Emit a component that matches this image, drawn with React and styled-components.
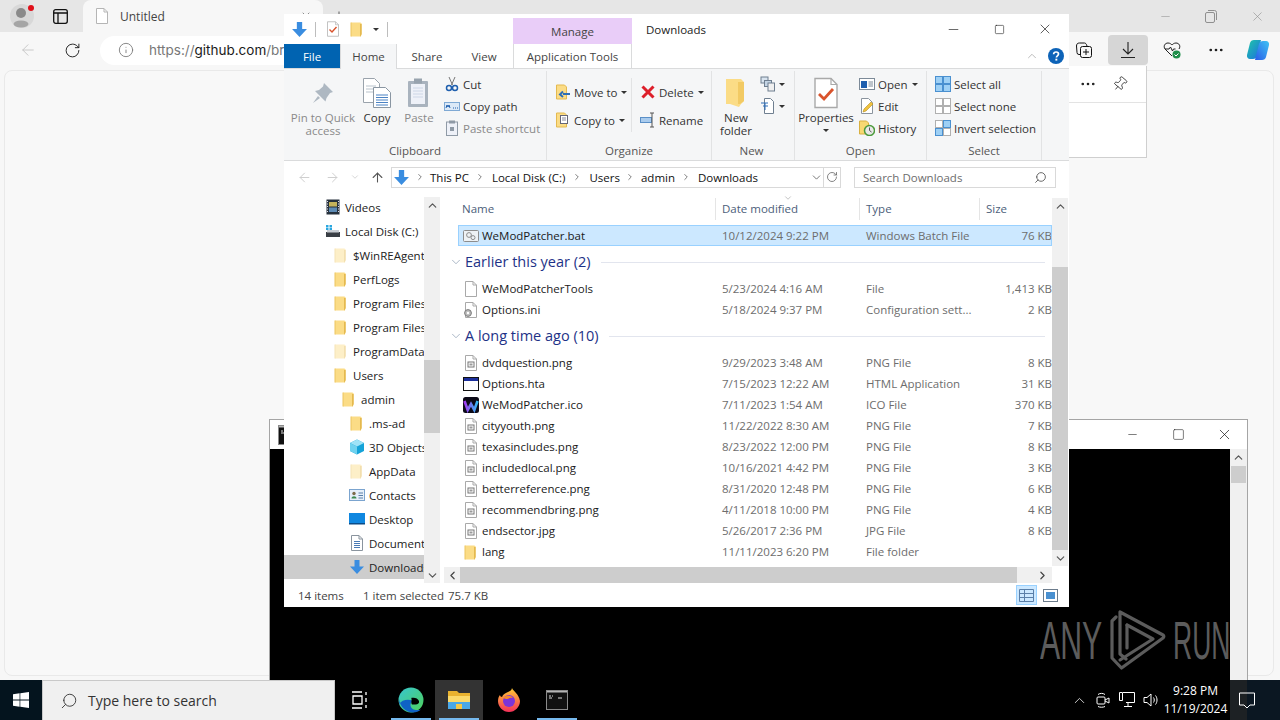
import React from 'react';
import styled, { createGlobalStyle } from 'styled-components';
import { ArrowLeft, ArrowRight, ArrowUp, ChevronDown, ChevronLeft, ChevronRight, ChevronUp, Ellipsis, Info, Minus, Pin, Plus, RotateCw, Search, Square, X } from 'lucide-react';

const GlobalStyle = createGlobalStyle`
  html, body { margin: 0; padding: 0; background: #000; overflow: hidden; }
  body { font-family: "Open Sans", "Noto Sans", sans-serif; font-size: 11.5px; line-height: 15px; color: #1a1a1a; }
  * { box-sizing: border-box; }
  svg { display: block; flex: none; }
`;

const Desktop = styled.div`
  position: relative;
  width: 1280px;
  height: 720px;
  overflow: hidden;
`;

/* ---------- browser behind everything ---------- */
const Browser = styled.div`
  position: absolute;
  inset: 0 0 40px 0;
  background: #f7f7f7;
  display: flex;
  flex-direction: column;
`;
const TabStrip = styled.div`
  height: 32px;
  background: #e6e6e6;
  display: flex;
  align-items: center;
`;
const Avatar = styled.div`
  position: relative;
  width: 44px;
  display: flex;
  justify-content: center;
  &::after {
    content: '';
    position: absolute;
    top: 1px;
    left: 28px;
    width: 6px;
    height: 6px;
    border-radius: 50%;
    background: #e0101a;
  }
`;
const TabAction = styled.div`
  width: 32px;
  display: flex;
  justify-content: center;
`;
const Tab = styled.div`
  margin-left: 7px;
  align-self: flex-end;
  width: 240px;
  height: 32px;
  background: #f7f7f7;
  border-radius: 8px 8px 0 0;
  display: flex;
  align-items: center;
  gap: 10px;
  padding: 0 11px;
  color: #444;
  font-size: 12px;
`;
const TabTitle = styled.span`
  flex: 1;
`;
const NewTab = styled.div`
  margin-left: 9px;
  color: #222;
`;
const WinButtons = styled.div`
  margin-left: auto;
  display: flex;
  color: #8f8f8f;
`;
const WinButton = styled.div`
  width: 46px;
  height: 30px;
  display: flex;
  align-items: center;
  justify-content: center;
`;
const BrowserBar = styled.div`
  height: 36px;
  display: flex;
  align-items: center;
  padding: 0 2px 0 8px;
`;
const BarButton = styled.div`
  width: ${p => p.$w || 40}px;
  height: 30px;
  margin-left: ${p => p.$ml || 0}px;
  display: flex;
  align-items: center;
  justify-content: center;
  border-radius: 4px;
  background: ${p => (p.$active ? '#d6d6d6' : 'transparent')};
  color: ${p => p.$color || '#1a1a1a'};
`;
const UrlPill = styled.div`
  flex: 1;
  height: 29px;
  margin: 0 2px 0 8px;
  background: #fff;
  border-radius: 15px;
  display: flex;
  align-items: center;
  padding-left: 18px;
  gap: 15px;
  color: #777;
  font-family: "Inter", sans-serif;
  font-size: 13.5px;
`;
const UrlHost = styled.span`
  color: #1a1a1a;
`;
const PageCard = styled.div`
  flex: 1;
  margin: 2px 6px 4px 4px;
  background: #f8f8f8;
  border: 1px solid #e9e9e9;
  border-radius: 8px;
`;
const Flyout = styled.div`
  position: absolute;
  top: 66px;
  right: 133px;
  width: 150px;
  height: 92px;
  background: #fff;
  border-right: 1px solid #cfcfcf;
  border-bottom: 1px solid #cfcfcf;
`;
const FlyoutHead = styled.div`
  height: 37px;
  border-bottom: 1px solid #e3e3e3;
  display: flex;
  justify-content: flex-end;
  align-items: center;
  padding-right: 10px;
`;
const FlyoutButton = styled.div`
  width: 32px;
  display: flex;
  justify-content: center;
`;

/* ---------- console window ---------- */
const Console = styled.div`
  position: absolute;
  left: 269px;
  top: 419px;
  width: 979px;
  height: 261px;
  border: 1px solid #a5a5a5;
  border-bottom: 0;
  background: #fff;
  display: flex;
  flex-direction: column;
`;
const ConsoleTitle = styled.div`
  height: 29px;
  flex: none;
  display: flex;
  justify-content: space-between;
  align-items: center;
  padding-left: 8px;
  color: #8a8a8a;
`;
const ConsoleBody = styled.div`
  flex: 1;
  display: flex;
`;
const ConsoleScreen = styled.div`
  flex: 1;
  background: #000;
`;
const ConsoleScroll = styled.div`
  width: 17px;
  background: #f0f0f0;
  display: flex;
  flex-direction: column;
  align-items: center;
  color: #555;
`;
const ConsoleThumb = styled.div`
  margin-top: 1px;
  width: 15px;
  height: 17px;
  background: #cdcdcd;
`;

/* ---------- explorer ---------- */
const Explorer = styled.div`
  position: absolute;
  left: 284px;
  top: 14px;
  width: 785px;
  height: 593px;
  background: #fff;
  display: flex;
  flex-direction: column;
`;
const TitleRow = styled.div`
  height: 30px;
  flex: none;
  display: flex;
`;
const Qat = styled.div`
  width: 229px;
  display: flex;
  align-items: center;
  padding: 0 0 0 7px;
`;
const QatSep = styled.div`
  width: 1px;
  height: 15px;
  margin: 0 ${p => p.$r || 0}px 0 ${p => p.$l || 0}px;
  background: #bdbdbd;
`;
const QatGap = styled.span`
  width: 8px;
`;
const ManageTab = styled.div`
  width: 119px;
  margin-top: 4px;
  background: #e9cdf8;
  color: #444;
  display: flex;
  align-items: center;
  justify-content: center;
`;
const WindowTitle = styled.div`
  margin-left: 14px;
  display: flex;
  align-items: center;
  color: #222;
`;
const ExplorerControls = styled.div`
  margin-left: auto;
  display: flex;
  color: #111;
  padding-right: ${p => p.$pr || 0}px;
`;
const ExplorerControl = styled.div`
  width: 46px;
  display: flex;
  align-items: center;
  justify-content: center;
`;
const TabRow = styled.div`
  position: relative;
  height: 25px;
  flex: none;
  display: flex;
  border-bottom: 1px solid #dadbdc;
`;
const RibbonTab = styled.div`
  width: ${p => p.$w}px;
  height: ${p => (p.$home ? 25 : 24)}px;
  display: flex;
  align-items: center;
  justify-content: center;
  color: ${p => (p.$file ? '#fff' : '#444')};
  background: ${p => (p.$file ? '#0063b1' : p.$home ? '#f5f6f7' : 'transparent')};
  border-left: ${p => (p.$home ? '1px solid #dadbdc' : '0')};
  border-right: ${p => (p.$home ? '1px solid #dadbdc' : '0')};
`;
const ContextTab = styled(RibbonTab)`
  margin-left: 2px;
  border-left: 1px solid #dadbdc;
  border-right: 1px solid #dadbdc;
`;
const TabRowEnd = styled.div`
  margin-left: auto;
  display: flex;
  align-items: center;
  gap: 9px;
  padding-right: 5px;
  color: #b8b8b8;
`;
const Ribbon = styled.div`
  height: 92px;
  flex: none;
  display: flex;
  background: #f5f6f7;
  border-bottom: 1px solid #dadbdc;
`;
const Group = styled.div`
  width: ${p => p.$w}px;
  display: flex;
  flex-direction: column;
  border-right: 1px solid #e2e3e4;
  margin: 2px 0 0;
`;
const GroupBody = styled.div`
  flex: 1;
  display: flex;
  padding: ${p => p.$pt || 2}px 0 0 ${p => p.$pl || 0}px;
`;
const GroupLabel = styled.div`
  height: 19px;
  text-align: center;
  color: #555;
  line-height: 19px;
  padding-right: ${p => p.$pr || 0}px;
`;
const LargeButton = styled.div`
  width: ${p => p.$w}px;
  display: flex;
  flex-direction: column;
  align-items: center;
  text-align: center;
  line-height: 13px;
  white-space: nowrap;
  color: ${p => (p.$off ? '#8a8a8a' : '#333')};
`;
const LargeIcon = styled.div`
  height: 38px;
  display: flex;
  align-items: center;
  justify-content: center;
  padding-top: 2px;
`;
const PropsCaret = styled.span`
  margin-top: 5px;
  border: 3px solid transparent;
  border-top: 3px solid #333;
  border-bottom: 0;
`;
const SmallCol = styled.div`
  margin-left: ${p => p.$ml || 0}px;
  width: ${p => p.$w || 'auto'};
  border-right: ${p => (p.$sep ? '1px solid #e2e3e4' : '0')};
  height: ${p => (p.$sep ? '54px' : 'auto')};
`;
const SmallRow = styled.div`
  height: ${p => p.$h || 22}px;
  display: flex;
  align-items: center;
  gap: 3px;
  white-space: nowrap;
  color: ${p => (p.$off ? '#8a8a8a' : '#333')};
`;
const Caret = styled.span`
  display: inline-block;
  margin-left: ${p => p.$ml ?? 1}px;
  border: 3px solid transparent;
  border-top: 3px solid #333;
  border-bottom: 0;
`;

const AddressRow = styled.div`
  height: 32px;
  flex: none;
  display: flex;
  align-items: center;
  padding-left: 6px;
`;
const NavButton = styled.div`
  width: ${p => p.$w}px;
  display: flex;
  justify-content: center;
  color: ${p => (p.$on ? '#555' : '#cfcfcf')};
`;
const AddressBox = styled.div`
  width: 450px;
  height: 21px;
  margin-left: 1px;
  border: 1px solid #d9d9d9;
  display: flex;
  align-items: center;
  padding-left: 1px;
  color: #111;
`;
const CrumbArrow = styled.span`
  width: ${p => p.$w || 24}px;
  display: flex;
  justify-content: center;
  color: #666;
`;
const AddressEnd = styled.div`
  margin-left: auto;
  height: 100%;
  display: flex;
  align-items: center;
  color: #666;
`;
const AddressRefresh = styled.div`
  width: 17px;
  height: 100%;
  border-left: 1px solid #d9d9d9;
  display: flex;
  align-items: center;
  justify-content: center;
`;
const SearchBox = styled.div`
  width: 202px;
  height: 21px;
  margin-left: 13px;
  border: 1px solid #d9d9d9;
  display: flex;
  align-items: center;
  justify-content: space-between;
  padding: 0 8px;
  color: #6d6d6d;
`;
const SearchGlass = styled.span`
  color: #555;
  transform: scaleX(-1);
`;

const MainArea = styled.div`
  flex: 1;
  min-height: 0;
  display: flex;
`;
const NavPane = styled.div`
  width: 156px;
  display: flex;
`;
const NavList = styled.div`
  width: 140px;
  padding-top: 2px;
  overflow: hidden;
`;
const NavRow = styled.div`
  height: 24px;
  display: flex;
  align-items: center;
  gap: 4px;
  white-space: nowrap;
  padding-left: ${p => 41 + p.$level * 8}px;
  background: ${p => (p.$selected ? '#cdcdcd' : 'transparent')};
  color: #222;
`;
const VBar = styled.div`
  width: 16px;
  margin: ${p => p.$top}px 0 ${p => p.$bottom}px;
  background: #f0f0f0;
  display: flex;
  flex-direction: column;
  color: #555;
`;
const BarArrow = styled.div`
  width: 16px;
  height: 16px;
  flex: none;
  margin-right: ${p => p.$mr || 0}px;
  display: flex;
  align-items: center;
  justify-content: center;
`;
const VThumb = styled.div`
  height: ${p => p.$h}px;
  margin-top: ${p => p.$top}px;
  margin-bottom: auto;
  background: #cdcdcd;
`;
const ListPane = styled.div`
  flex: 1;
  display: flex;
`;
const ListMain = styled.div`
  width: 612px;
  display: flex;
  flex-direction: column;
`;
const HeaderRow = styled.div`
  position: relative;
  height: 29px;
  flex: none;
  margin-left: 16px;
  padding-top: 5px;
  display: grid;
  grid-template-columns: 260px 144px 120px 1fr;
  color: #4c607a;
`;
const HeaderCell = styled.div`
  height: 22px;
  line-height: 21px;
  padding-left: 6px;
  border-right: ${p => (p.$last ? '0' : '1px solid #e5e5e5')};
`;
const SortMark = styled.div`
  position: absolute;
  top: 0;
  left: 327px;
  color: #888;
`;
const Rows = styled.div`
  flex: 1;
  padding-top: 3px;
  overflow: hidden;
`;
const FileRowBox = styled.div`
  height: 21px;
  margin-left: 18px;
  display: grid;
  grid-template-columns: 264px 144px 120px 1fr;
  align-items: center;
  white-space: nowrap;
  background: ${p => (p.$selected ? '#cce8ff' : 'transparent')};
  outline: ${p => (p.$selected ? '1px solid #99d1ff' : '0')};
  outline-offset: -1px;
`;
const NameCell = styled.div`
  display: flex;
  align-items: center;
  gap: 3px;
  padding-left: 5px;
  color: #1a1a1a;
`;
const DimCell = styled.div`
  color: #6d6d6d;
`;
const SizeCell = styled(DimCell)`
  text-align: right;
`;
const GroupHead = styled.div`
  height: 32px;
  display: flex;
  align-items: center;
  padding: 0 7px 0 9px;
  gap: 2px;
  color: #1e3287;
  font-size: 14.5px;
  line-height: 20px;
  white-space: nowrap;
`;
const GroupChevron = styled.div`
  color: #8a9bb0;
  width: 14px;
`;
const GroupLine = styled.div`
  flex: 1;
  height: 1px;
  margin-left: 8px;
  background: #e2e5ee;
`;
const HBar = styled.div`
  height: 16px;
  flex: none;
  margin-left: 4px;
  background: #f0f0f0;
  display: flex;
  color: #444;
`;
const HThumb = styled.div`
  width: 557px;
  background: #cdcdcd;
  margin-right: auto;
`;
const StatusBar = styled.div`
  height: 24px;
  flex: none;
  display: flex;
  align-items: center;
  padding: 0 8px 0 14px;
  color: #444;
`;
const StatusCount = styled.span`
  width: 65px;
`;
const StatusSel = styled.span`
  width: 85px;
  white-space: nowrap;
`;
const ViewButtons = styled.div`
  margin-left: auto;
  display: flex;
  gap: 3px;
`;
const ViewButton = styled.div`
  width: 21px;
  height: 20px;
  display: flex;
  align-items: center;
  justify-content: center;
  background: ${p => (p.$on ? '#cce8ff' : 'transparent')};
  border: 1px solid ${p => (p.$on ? '#99d1ff' : 'transparent')};
`;

/* ---------- watermark ---------- */
const Watermark = styled.div`
  position: absolute;
  left: 1040px;
  top: 608px;
  width: 190px;
  height: 66px;
  overflow: hidden;
  display: flex;
  align-items: center;
  color: #5c5c5c;
  font-family: "Liberation Sans", sans-serif;
  font-size: 53px;
  line-height: 66px;
`;
const MarkWord = styled.span`
  width: ${p => p.$w}px;
  margin-left: ${p => p.$ml || 0}px;
  flex: none;
  transform: scaleX(${p => p.$sx});
  transform-origin: left center;
`;

/* ---------- taskbar ---------- */
const Taskbar = styled.div`
  position: absolute;
  left: 0;
  right: 0;
  bottom: 0;
  height: 40px;
  display: flex;
  align-items: stretch;
  background: linear-gradient(90deg, #04141e 270px, #000 270px, #000 1230px, #1d2124 1230px, #1d2124 1247px, #0b1722 1247px);
  color: #fff;
`;
const StartButton = styled.div`
  width: 42px;
  display: flex;
  align-items: center;
  justify-content: center;
`;
const TaskSearch = styled.div`
  width: 293px;
  background: #f0f0f0;
  border: 1px solid #c9c9c9;
  border-bottom: 0;
  display: flex;
  align-items: center;
  gap: 10px;
  padding-left: 17px;
  color: #333;
  font-size: 14px;
  margin-right: 1px;
`;
const TaskGlass = styled.span`
  transform: scaleX(-1);
`;
const TaskSlot = styled.div`
  position: relative;
  width: 48px;
  margin-left: ${p => p.$ml || 0}px;
  display: flex;
  align-items: center;
  justify-content: center;
  background: ${p => (p.$active ? '#333' : 'transparent')};
  &::after {
    content: '';
    display: ${p => (p.$running ? 'block' : 'none')};
    position: absolute;
    bottom: 0;
    left: 4px;
    right: 4px;
    height: 2px;
    background: #76b9ed;
  }
`;
const Tray = styled.div`
  margin-left: auto;
  display: flex;
  align-items: center;
  padding-right: 14px;
`;
const TraySlot = styled.div`
  width: 24px;
  display: flex;
  justify-content: center;
`;
const Clock = styled.div`
  width: 65px;
  text-align: center;
  font-size: 12px;
  line-height: 18px;
  white-space: nowrap;
  display: flex;
  flex-direction: column;
  align-items: center;
`;
const Notify = styled.div`
  width: 38px;
  display: flex;
  justify-content: center;
`;
const PinTilt = styled.span`
  transform: rotate(40deg);
`;

/* ---------- drawings ---------- */
const Ico = ({ s = 16, v = 16, children }) => (
  <svg width={s} height={s} viewBox={`0 0 ${v} ${v}`} fill="none">{children}</svg>
);

const Folder = ({ pale, s = 16 }) => (
  <Ico s={s}>
    <g opacity={pale ? 0.45 : 1}>
      <path d="M2 1.500h9.500l1 1V14l-1 1.500H2z" fill="#fbdc86" />
      <path d="M11 3h1.700V13l-1.200 2.500H11z" fill="#e4b94f" />
      <path d="M2 1.500v14" stroke="#ecc45f" />
    </g>
  </Ico>
);

const Page = ({ children, stroke = '#a9a9a9' }) => (
  <Ico>
    <path d="M2.500 .5h7.500l3.500 3.500v11.500h-11z" fill="#fff" stroke={stroke} />
    <path d="M10 .5V4h3.500" stroke={stroke} />
    {children}
  </Ico>
);

const ImageFile = () => (
  <Page>
    <rect x="5" y="7" width="6" height="5" fill="#fff" stroke="#777" />
    <rect x="6.500" y="8.500" width="3" height="2" fill="#9a9a9a" />
  </Page>
);
const BlankFile = () => <Page />;
const IniFile = () => (
  <Page>
    <circle cx="5" cy="11" r="3.400" fill="#bdbdbd" stroke="#7a7a7a" />
    <circle cx="5" cy="11" r="1.200" fill="#fff" />
  </Page>
);
const BatFile = () => (
  <Ico>
    <rect x=".5" y="2.500" width="15" height="11" rx="1" fill="#eef2f5" stroke="#8d8d8d" />
    <circle cx="6" cy="7" r="2.400" fill="none" stroke="#8d8d8d" />
    <circle cx="10" cy="9.600" r="2" fill="none" stroke="#8d8d8d" />
  </Ico>
);
const HtaFile = () => (
  <Ico>
    <rect x=".5" y="1.500" width="15" height="13" fill="#fff" stroke="#111" />
    <rect x="1" y="2" width="14" height="3" fill="#1c2f9c" />
  </Ico>
);
const IcoFile = () => (
  <Ico>
    <rect width="16" height="16" rx="2.500" fill="#0c0a18" />
    <path d="M1.500 4l3.200 9 3.300-6 3.300 6 3.200-9" stroke="url(#wemod)" strokeWidth="2.600" />
    <defs>
      <linearGradient id="wemod" x1="0" y1="0" x2="16" y2="0" gradientUnits="userSpaceOnUse">
        <stop stopColor="#b02cf0" />
        <stop offset="1" stopColor="#26c8f5" />
      </linearGradient>
    </defs>
  </Ico>
);

const DownArrow = ({ s = 16 }) => (
  <Ico s={s}>
    <path d="M5.500 1h5v6.500h4.500L8 15 1 7.500h4.500z" fill="#3a8de0" />
  </Ico>
);

const Properties = ({ s = 16 }) => (
  <Ico s={s} v={32}>
    <path d="M5 1.500h16l6 6v23H5z" fill="#fff" stroke="#a9a9a9" strokeWidth="1.400" />
    <path d="M21 1.500v6h6" stroke="#a9a9a9" strokeWidth="1.200" />
    <path d="M9 17l5 5 9-10" stroke="#d9532c" strokeWidth="2.800" />
  </Ico>
);
const PinBig = () => (
  <svg width="26" height="26" viewBox="0 0 26 26">
    <path d="M14 3l9 9-3 1-3.500 5-1 3.500L5 11l4-1 4-3.500z" fill="#aeb8c2" />
    <path d="M8 16l-5 7 7-5z" fill="#aeb8c2" />
  </svg>
);
const CopyBig = () => (
  <svg width="32" height="32" viewBox="0 0 32 32" fill="none">
    <path d="M2.500 1.500h11l5 5v19h-16z" fill="#fff" stroke="#9aa3ac" />
    <path d="M5 9h10M5 12h10M5 15h10" stroke="#b9c3cc" />
    <path d="M12.500 10.500h12l5 5v15h-17z" fill="#fff" stroke="#8a96a2" />
    <path d="M15 18h12M15 20.500h12M15 23h12M15 25.500h12M15 28h12" stroke="#4a82c4" />
  </svg>
);
const PasteBig = () => (
  <svg width="28" height="32" viewBox="0 0 28 32" fill="none">
    <rect x="3" y="4" width="20" height="26" rx="1" fill="#a9b3be" />
    <rect x="6" y="7" width="14" height="20" fill="#eef1f8" />
    <path d="M8 11h10M8 14h10M8 17h10M8 20h10" stroke="#cdd6e6" />
    <rect x="9" y="1.500" width="8" height="5" fill="#98a3ae" />
  </svg>
);
const Scissors = () => (
  <Ico>
    <path d="M5 1l3.500 8M11 1L7.500 9" stroke="#777" />
    <circle cx="5" cy="12" r="2.500" stroke="#1f5fae" strokeWidth="1.500" />
    <circle cx="11" cy="12" r="2.500" stroke="#1f5fae" strokeWidth="1.500" />
  </Ico>
);
const CopyPath = () => (
  <Ico>
    <rect x=".5" y="4.500" width="15" height="8" fill="#dce9f7" stroke="#7fa9d4" />
    <path d="M2 10l1-3 1 2 1-2 1 3M9 10h1M11 10h1M13 10h1" stroke="#1f5fae" />
  </Ico>
);
const PasteSmall = () => (
  <Ico>
    <rect x="2.500" y="2" width="11" height="13.500" fill="#eef1f8" stroke="#8f9aa6" />
    <rect x="5" y=".5" width="6" height="3" fill="#8f9aa6" />
    <path d="M6 7h4v4H6z" fill="#8f9aa6" />
  </Ico>
);
const MoveTo = () => (
  <Ico>
    <path d="M1.500 1h8l2 2v12h-10z" fill="#fbdc86" stroke="#e4b94f" />
    <path d="M15 10H8M8 7.500L5 10.500 8 13" stroke="#2f6fb8" strokeWidth="2" />
  </Ico>
);
const CopyTo = () => (
  <Ico>
    <path d="M1.500 1h8l2 2v12h-10z" fill="#fbdc86" stroke="#e4b94f" />
    <rect x="5.500" y="3.500" width="7" height="8" fill="#fff" stroke="#667" />
    <path d="M7 6h4M7 8h4" stroke="#889" />
  </Ico>
);
const RedX = () => (
  <Ico>
    <path d="M2.500 2.500l11 11M13.500 2.500l-11 11" stroke="#dd1f2a" strokeWidth="3" />
  </Ico>
);
const Rename = () => (
  <Ico>
    <rect x=".5" y="5.500" width="11" height="5" fill="#a9cbed" stroke="#5a8fc7" />
    <path d="M12 1v14M10 1h4M10 15h4" stroke="#555" />
  </Ico>
);
const NewFolderBig = () => (
  <svg width="22" height="30" viewBox="0 0 22 30">
    <path d="M1 1h15l3 3v19l-3 3-2 3-9-3H1z" fill="#fbdc86" />
    <path d="M13 4h6v19l-4 3-2 0z" fill="#f2ca64" />
  </svg>
);
const NewItem = () => (
  <Ico>
    <rect x="1" y="1" width="7" height="6" fill="#d9e4ef" stroke="#6f7f90" />
    <rect x="4.500" y="4.500" width="7" height="6" fill="#c4d4e4" stroke="#6f7f90" />
    <rect x="8" y="7" width="6.500" height="8" fill="#f0f0f0" stroke="#6f7f90" />
  </Ico>
);
const EasyAccess = () => (
  <Ico>
    <path d="M4.500 .5h6l3 3v12h-9z" fill="#fff" stroke="#6f7f90" />
    <path d="M1 5h7M3 8h5M5 5v7" stroke="#2f6fb8" />
  </Ico>
);
const OpenIcon = () => (
  <Ico>
    <rect x=".5" y="2.500" width="15" height="11" fill="#fff" stroke="#7c8a98" />
    <rect x="2" y="5" width="6" height="7" fill="#1f5fae" />
    <path d="M9.500 6h4.500M9.500 8h4.500M9.500 10h4.500" stroke="#7c8a98" />
  </Ico>
);
const EditIcon = () => (
  <Ico>
    <path d="M2.500 .5h7l4 4v11h-11z" fill="#fff" stroke="#8a949e" />
    <path d="M4 14l1-3 7-7 2 2-7 7z" fill="#f0c23e" stroke="#b58f1e" strokeWidth=".6" />
  </Ico>
);
const HistoryIcon = () => (
  <Ico>
    <path d="M.5 1h7l2 2v11h-9z" fill="#f7d872" stroke="#d8b040" />
    <circle cx="10.500" cy="10.500" r="5" fill="#e8e8e8" stroke="#4c9a3c" strokeWidth="1.500" />
    <path d="M10.500 7.500v3l2 1.500" stroke="#555" />
  </Ico>
);
const SelectGrid = ({ filled }) => (
  <Ico>
    {[[.5, .5], [8.500, .5], [.5, 8.500], [8.500, 8.500]].map(([x, y], i) => {
      const on = filled[i];
      return <rect key={i} x={x} y={y} width="7" height="7" fill={on ? '#9ed0f5' : '#fff'} stroke={on ? '#4a90d0' : '#b0b0b0'} />;
    })}
  </Ico>
);

const VideoIcon = () => (
  <Ico>
    <rect x="1.500" y=".5" width="13" height="15" fill="#26313c" />
    <rect x="4" y="3" width="8" height="4.500" fill="#c5b35a" />
    <rect x="4" y="8.500" width="8" height="4.500" fill="#5d8bb5" />
    <path d="M2.500 2v12M13.500 2v12" stroke="#dde" strokeDasharray="1 1.500" />
  </Ico>
);
const DiskIcon = () => (
  <Ico>
    <rect x="1" y="9" width="14" height="5" fill="#3a3f45" />
    <rect x="2" y="7" width="12" height="2.500" fill="#c9ced4" />
    <rect x="1" y="2" width="2.500" height="2.500" fill="#2aa7e0" />
    <rect x="4.500" y="2" width="2.500" height="2.500" fill="#2aa7e0" />
    <rect x="1" y="5" width="2.500" height="2" fill="#2aa7e0" />
    <rect x="4.500" y="5" width="2.500" height="2" fill="#2aa7e0" />
  </Ico>
);
const ObjectsIcon = () => (
  <Ico>
    <path d="M8 .5l7 3.500v8l-7 3.500-7-3.500V4z" fill="#15a3d8" />
    <path d="M8 .5l7 3.500-7 3.500L1 4z" fill="#9fe3f7" />
    <path d="M1 4l7 3.500v8L1 12z" fill="#6fd2ef" />
  </Ico>
);
const ContactsIcon = () => (
  <Ico>
    <rect x=".5" y="2.500" width="15" height="11" fill="#e6f0fa" stroke="#7ba4cf" />
    <circle cx="5" cy="6.500" r="1.700" fill="#7c6c4a" />
    <path d="M2.500 11.500c0-3 5-3 5 0z" fill="#3d8a50" />
    <path d="M9.500 6h4.500M9.500 8.500h4.500M9.500 11h4.500" stroke="#5a7fa8" />
  </Ico>
);
const DesktopIcon = () => (
  <Ico>
    <rect y="2" width="16" height="11" fill="#0f87e0" />
    <rect y="12" width="16" height="1.500" fill="#0a4c88" />
  </Ico>
);
const DocsIcon = () => (
  <Page stroke="#8a949e">
    <path d="M5 6.500h6M5 8.500h6M5 10.500h6M5 12.500h6" stroke="#4a7bb5" />
  </Page>
);

const Edge = () => (
  <svg width="26" height="26" viewBox="0 0 26 26">
    <defs>
      <linearGradient id="edgeA" x1="0" y1="0" x2="1" y2="1">
        <stop stopColor="#37c6d0" />
        <stop offset="1" stopColor="#4fd15a" />
      </linearGradient>
    </defs>
    <circle cx="13" cy="13" r="12.500" fill="url(#edgeA)" />
    <path d="M1 12C2 20 8 25.500 15 25.500c3 0 6-1 8-3-5 1.500-10 0-10.500-4-.3-2 1-3.500 2.500-4.500-5-2.500-11-1-14 3z" fill="#0f62c4" />
    <path d="M13 11c3-1 7 0 8 3 .5 2-1 3.500-3.500 3.500H14c-1.500-2 .5-6-1-6.500z" fill="#000" />
  </svg>
);
const ExplorerIcon = () => (
  <svg width="24" height="24" viewBox="0 0 24 24">
    <path d="M1 3h9l2 2h11v5H1z" fill="#e9b22f" />
    <path d="M1 8h22v13H1z" fill="#fbd96a" />
    <path d="M1 14h22v7H1z" fill="#4aa8e8" />
    <rect x="9" y="16" width="6" height="5" fill="#f6c948" />
  </svg>
);
const Firefox = () => (
  <svg width="24" height="26" viewBox="0 0 24 26">
    <defs>
      <linearGradient id="ffA" x1="0" y1="0" x2="0" y2="1">
        <stop stopColor="#ffcc33" />
        <stop offset="1" stopColor="#f5305a" />
      </linearGradient>
    </defs>
    <path d="M15 1c1 3 7 6 8 13 0 6-5 11-11 11S1 20 1 14c0-3 1-5 2-6 0 1 1 2 2 2 1-3 4-4 6-5 2-1 4-2 4-4z" fill="url(#ffA)" />
    <circle cx="12" cy="14" r="6" fill="#7c34d8" />
    <path d="M6 11c3-3 8-3 10 0-3-1-4 1-7 1z" fill="#f78a2a" />
  </svg>
);
const Terminal = () => (
  <svg width="22" height="22" viewBox="0 0 22 22" fill="none">
    <rect x=".5" y="1.500" width="21" height="19" fill="#111" stroke="#8a8a8a" />
    <rect x="1" y="2" width="20" height="1.500" fill="#b5b5b5" />
    <path d="M3 7h2M6 7h1M3 9h3M12 9h4" stroke="#ddd" />
  </svg>
);
const WindowsLogo = () => (
  <svg width="16" height="16" viewBox="0 0 16 16">
    <path d="M0 2.200l6.600-.9v6.300H0zM7.300 1.200L16 0v7.600H7.300zM0 8.400h6.600v6.300L0 13.800zM7.300 8.400H16V16l-8.700-1.200z" fill="#fff" />
  </svg>
);
const Copilot = () => (
  <svg width="24" height="24" viewBox="0 0 24 24">
    <defs>
      <linearGradient id="cpA" x1="0" y1="0" x2="1" y2="1">
        <stop stopColor="#1fc8a8" />
        <stop offset="1" stopColor="#1c6fe0" />
      </linearGradient>
      <linearGradient id="cpB" x1="0" y1="1" x2="1" y2="0">
        <stop stopColor="#2a5be8" />
        <stop offset="1" stopColor="#3fc4f4" />
      </linearGradient>
    </defs>
    <path d="M8 2h7l-4 16c-.5 2-2 3-4 3H4c-2 0-3.500-2-3-4l3-12c.5-2 2-3 4-3z" fill="url(#cpA)" />
    <path d="M16 22H9l4-16c.5-2 2-3 4-3h3c2 0 3.500 2 3 4l-3 12c-.5 2-2 3-4 3z" fill="url(#cpB)" />
  </svg>
);
const AnyRunMark = () => (
  <svg width="60" height="66" viewBox="0 0 60 66" fill="none" stroke="#5c5c5c" strokeWidth="3.200" strokeLinejoin="round" strokeLinecap="round">
    <path d="M10 9L6 13v37l9.500 10L57 30c1-1 1-2 0-3L14 4v42l6 5" />
    <path d="M21 17l26 14-33 21" />
    <path d="M21 17v23" />
  </svg>
);
const RestoreIcon = () => (
  <svg width="12" height="13" viewBox="0 0 12 13" fill="none" stroke="currentColor">
    <rect x=".5" y="2.500" width="9" height="10" rx="1.500" />
    <path d="M3 .5h6.500a2 2 0 0 1 2 2V10" />
  </svg>
);

const NAV_ITEMS = [
  { label: 'Videos', level: 0, icon: <VideoIcon /> },
  { label: 'Local Disk (C:)', level: 0, icon: <DiskIcon /> },
  { label: '$WinREAgent', level: 1, icon: <Folder pale /> },
  { label: 'PerfLogs', level: 1, icon: <Folder /> },
  { label: 'Program Files', level: 1, icon: <Folder /> },
  { label: 'Program Files (x86)', level: 1, icon: <Folder /> },
  { label: 'ProgramData', level: 1, icon: <Folder pale /> },
  { label: 'Users', level: 1, icon: <Folder /> },
  { label: 'admin', level: 2, icon: <Folder /> },
  { label: '.ms-ad', level: 3, icon: <Folder /> },
  { label: '3D Objects', level: 3, icon: <ObjectsIcon /> },
  { label: 'AppData', level: 3, icon: <Folder pale /> },
  { label: 'Contacts', level: 3, icon: <ContactsIcon /> },
  { label: 'Desktop', level: 3, icon: <DesktopIcon /> },
  { label: 'Documents', level: 3, icon: <DocsIcon /> },
  { label: 'Downloads', level: 3, icon: <DownArrow />, selected: true },
];

const EARLIER = [
  { name: 'WeModPatcherTools', date: '5/23/2024 4:16 AM', type: 'File', size: '1,413 KB', icon: <BlankFile /> },
  { name: 'Options.ini', date: '5/18/2024 9:37 PM', type: 'Configuration sett...', size: '2 KB', icon: <IniFile /> },
];

const LONG_AGO = [
  { name: 'dvdquestion.png', date: '9/29/2023 3:48 AM', type: 'PNG File', size: '8 KB', icon: <ImageFile /> },
  { name: 'Options.hta', date: '7/15/2023 12:22 AM', type: 'HTML Application', size: '31 KB', icon: <HtaFile /> },
  { name: 'WeModPatcher.ico', date: '7/11/2023 1:54 AM', type: 'ICO File', size: '370 KB', icon: <IcoFile /> },
  { name: 'cityyouth.png', date: '11/22/2022 8:30 AM', type: 'PNG File', size: '7 KB', icon: <ImageFile /> },
  { name: 'texasincludes.png', date: '8/23/2022 12:00 PM', type: 'PNG File', size: '8 KB', icon: <ImageFile /> },
  { name: 'includedlocal.png', date: '10/16/2021 4:42 PM', type: 'PNG File', size: '3 KB', icon: <ImageFile /> },
  { name: 'betterreference.png', date: '8/31/2020 12:48 PM', type: 'PNG File', size: '6 KB', icon: <ImageFile /> },
  { name: 'recommendbring.png', date: '4/11/2018 10:00 PM', type: 'PNG File', size: '4 KB', icon: <ImageFile /> },
  { name: 'endsector.jpg', date: '5/26/2017 2:36 PM', type: 'JPG File', size: '8 KB', icon: <ImageFile /> },
  { name: 'lang', date: '11/11/2023 6:20 PM', type: 'File folder', size: '', icon: <Folder /> },
];

const FileRow = ({ file, selected }) => (
  <FileRowBox $selected={selected}>
    <NameCell>{file.icon}{file.name}</NameCell>
    <DimCell>{file.date}</DimCell>
    <DimCell>{file.type}</DimCell>
    <SizeCell>{file.size}</SizeCell>
  </FileRowBox>
);

const FileGroup = ({ title }) => (
  <GroupHead>
    <GroupChevron><ChevronDown size={14} strokeWidth={1.2} /></GroupChevron>
    {title}
    <GroupLine />
  </GroupHead>
);

const Crumb = ({ text, gap }) => (
  <>
    {text}
    <CrumbArrow $w={gap}><ChevronRight size={10} strokeWidth={2} /></CrumbArrow>
  </>
);

const App = () => (
  <Desktop>
    <GlobalStyle />

    <Browser>
      <TabStrip>
        <Avatar>
          <svg width="24" height="24" viewBox="0 0 24 24">
            <circle cx="12" cy="12" r="12" fill="#d8d8d8" />
            <circle cx="11" cy="9" r="5" fill="#8a8a8a" />
            <ellipse cx="11" cy="20" rx="7.500" ry="3.500" fill="#a5a5a5" />
          </svg>
        </Avatar>
        <TabAction>
          <svg width="15" height="15" viewBox="0 0 15 15" fill="none" stroke="#111" strokeWidth="1.300">
            <rect x=".7" y=".7" width="13.600" height="13.600" rx="2" />
            <path d="M.7 4h13.600M5 4v10" />
          </svg>
        </TabAction>
        <Tab>
          <Page stroke="#b5b5b5" />
          <TabTitle>Untitled</TabTitle>
          <X size={12} strokeWidth={1.2} />
        </Tab>
        <NewTab><Plus size={14} strokeWidth={1.2} /></NewTab>
        <WinButtons>
          <WinButton><Minus size={13} strokeWidth={1} /></WinButton>
          <WinButton><RestoreIcon /></WinButton>
          <WinButton><X size={15} strokeWidth={1} /></WinButton>
        </WinButtons>
      </TabStrip>
      <BrowserBar>
        <BarButton $color="#c4c4c4"><ArrowLeft size={18} strokeWidth={1.2} /></BarButton>
        <BarButton $ml={4}><RotateCw size={17} strokeWidth={1.3} /></BarButton>
        <UrlPill>
          <Info size={16} strokeWidth={1.3} />
          <span>https://<UrlHost>github.com</UrlHost>/bri</span>
        </UrlPill>
        <BarButton>
          <svg width="18" height="18" viewBox="0 0 18 18" fill="none" stroke="#111">
            <rect x="5.500" y="5.500" width="11" height="11" rx="2" />
            <path d="M11 8v6M8 11h6M5 13.500H4a2 2 0 0 1-2-2L1.500 5c0-2 1-3 3-3h5c1 0 2 1 2.500 3" />
          </svg>
        </BarButton>
        <BarButton $ml={4} $active>
          <svg width="16" height="18" viewBox="0 0 16 18" fill="none" stroke="#222" strokeWidth="1.100">
            <path d="M8 1v12M3 8l5 5 5-5M1 16.500h14" />
          </svg>
        </BarButton>
        <BarButton $ml={4}>
          <svg width="18" height="18" viewBox="0 0 18 18" fill="none">
            <path d="M9 15L2 8C0 5 2 2 5 2c2 0 3 1 4 2 1-1 2-2 4-2 3 0 5 3 3 6" stroke="#222" />
            <path d="M2 8h4l1.500-2 2 4 1-2h2" stroke="#222" />
            <circle cx="13.500" cy="13.500" r="4" fill="#1f8f4a" />
            <path d="M11.500 13.500l1.500 1.500 2.500-2.500" stroke="#fff" />
          </svg>
        </BarButton>
        <BarButton $ml={4}><Ellipsis size={18} strokeWidth={1.6} /></BarButton>
        <BarButton $ml={2}><Copilot /></BarButton>
      </BrowserBar>
      <PageCard />
      <Flyout>
        <FlyoutHead>
          <FlyoutButton><Ellipsis size={18} strokeWidth={1.5} /></FlyoutButton>
          <FlyoutButton><PinTilt><Pin size={16} strokeWidth={1.1} /></PinTilt></FlyoutButton>
        </FlyoutHead>
      </Flyout>
    </Browser>

    <Console>
      <ConsoleTitle>
        <Terminal />
        <ExplorerControls>
          <WinButton><Minus size={13} strokeWidth={1} /></WinButton>
          <WinButton><Square size={13} strokeWidth={1} /></WinButton>
          <WinButton><X size={17} strokeWidth={1} /></WinButton>
        </ExplorerControls>
      </ConsoleTitle>
      <ConsoleBody>
        <ConsoleScreen />
        <ConsoleScroll>
          <BarArrow><ChevronUp size={13} strokeWidth={2.2} /></BarArrow>
          <ConsoleThumb />
        </ConsoleScroll>
      </ConsoleBody>
    </Console>

    <Explorer>
      <TitleRow>
        <Qat>
          <DownArrow s={17} />
          <QatSep $l={7} $r={9} />
          <Properties s={16} />
          <QatGap />
          <Folder />
          <Caret $ml={8} />
          <QatSep $l={8} />
        </Qat>
        <ManageTab>Manage</ManageTab>
        <WindowTitle>Downloads</WindowTitle>
        <ExplorerControls $pr={1}>
          <ExplorerControl><Minus size={15} strokeWidth={1} /></ExplorerControl>
          <ExplorerControl><Square size={11} strokeWidth={1.2} /></ExplorerControl>
          <ExplorerControl><X size={16} strokeWidth={1} /></ExplorerControl>
        </ExplorerControls>
      </TitleRow>

      <TabRow>
        <RibbonTab $w={56} $file>File</RibbonTab>
        <RibbonTab $w={57} $home>Home</RibbonTab>
        <RibbonTab $w={60}>Share</RibbonTab>
        <RibbonTab $w={54}>View</RibbonTab>
        <ContextTab $w={119}>Application Tools</ContextTab>
        <TabRowEnd>
          <ChevronUp size={14} strokeWidth={1.6} />
          <svg width="16" height="16" viewBox="0 0 16 16">
            <circle cx="8" cy="8" r="8" fill="#0d63b8" />
            <path d="M5.600 6.200C5.700 4.600 6.800 4 8.100 4c1.400 0 2.400.8 2.400 2 0 1.900-2.100 1.900-2.100 3.600" fill="none" stroke="#fff" strokeWidth="1.700" />
            <rect x="7.400" y="10.700" width="1.900" height="1.900" fill="#fff" />
          </svg>
        </TabRowEnd>
      </TabRow>

      <Ribbon>
        <Group $w={263}>
          <GroupBody $pl={8}>
            <LargeButton $w={62} $off>
              <LargeIcon><PinBig /></LargeIcon>
              <span>Pin to Quick</span>
              <span>access</span>
            </LargeButton>
            <LargeButton $w={46}>
              <LargeIcon><CopyBig /></LargeIcon>
              Copy
            </LargeButton>
            <LargeButton $w={38} $off>
              <LargeIcon><PasteBig /></LargeIcon>
              Paste
            </LargeButton>
            <SmallCol $ml={6}>
              <SmallRow><Scissors />Cut</SmallRow>
              <SmallRow><CopyPath />Copy path</SmallRow>
              <SmallRow $off><PasteSmall />Paste shortcut</SmallRow>
            </SmallCol>
          </GroupBody>
          <GroupLabel>Clipboard</GroupLabel>
        </Group>

        <Group $w={165}>
          <GroupBody $pl={8} $pt={7}>
            <SmallCol $w="77px" $sep>
              <SmallRow $h={28}><MoveTo />Move to<Caret /></SmallRow>
              <SmallRow $h={28}><CopyTo />Copy to<Caret /></SmallRow>
            </SmallCol>
            <SmallCol $ml={8}>
              <SmallRow $h={28}><RedX />Delete<Caret /></SmallRow>
              <SmallRow $h={28}><Rename />Rename</SmallRow>
            </SmallCol>
          </GroupBody>
          <GroupLabel>Organize</GroupLabel>
        </Group>

        <Group $w={83}>
          <GroupBody>
            <LargeButton $w={48}>
              <LargeIcon><NewFolderBig /></LargeIcon>
              <span>New</span>
              <span>folder</span>
            </LargeButton>
            <SmallCol>
              <SmallRow><NewItem /><Caret $ml={0} /></SmallRow>
              <SmallRow><EasyAccess /><Caret $ml={0} /></SmallRow>
            </SmallCol>
          </GroupBody>
          <GroupLabel $pr={3}>New</GroupLabel>
        </Group>

        <Group $w={132}>
          <GroupBody>
            <LargeButton $w={62}>
              <LargeIcon><Properties s={32} /></LargeIcon>
              Properties
              <PropsCaret />
            </LargeButton>
            <SmallCol $ml={2}>
              <SmallRow><OpenIcon />Open<Caret /></SmallRow>
              <SmallRow><EditIcon />Edit</SmallRow>
              <SmallRow><HistoryIcon />History</SmallRow>
            </SmallCol>
          </GroupBody>
          <GroupLabel>Open</GroupLabel>
        </Group>

        <Group $w={115}>
          <GroupBody $pl={8}>
            <SmallCol>
              <SmallRow><SelectGrid filled={[1, 1, 1, 1]} />Select all</SmallRow>
              <SmallRow><SelectGrid filled={[0, 0, 0, 0]} />Select none</SmallRow>
              <SmallRow><SelectGrid filled={[0, 1, 1, 0]} />Invert selection</SmallRow>
            </SmallCol>
          </GroupBody>
          <GroupLabel>Select</GroupLabel>
        </Group>
      </Ribbon>

      <AddressRow>
        <NavButton $w={28}><ArrowLeft size={15} strokeWidth={1.6} /></NavButton>
        <NavButton $w={28}><ArrowRight size={15} strokeWidth={1.6} /></NavButton>
        <NavButton $w={18}><ChevronDown size={10} strokeWidth={2} /></NavButton>
        <NavButton $w={26} $on><ArrowUp size={15} strokeWidth={1.7} /></NavButton>
        <AddressBox>
          <DownArrow s={17} />
          <CrumbArrow $w={20}><ChevronRight size={10} strokeWidth={2} /></CrumbArrow>
          <Crumb text="This PC" gap={23} />
          <Crumb text="Local Disk (C:)" gap={24} />
          <Crumb text="Users" gap={21} />
          <Crumb text="admin" gap={23} />
          Downloads
          <AddressEnd>
            <ChevronDown size={13} strokeWidth={1.6} />
            <AddressRefresh><RotateCw size={12} strokeWidth={1.6} /></AddressRefresh>
          </AddressEnd>
        </AddressBox>
        <SearchBox>
          Search Downloads
          <SearchGlass><Search size={13} strokeWidth={1.6} /></SearchGlass>
        </SearchBox>
      </AddressRow>

      <MainArea>
        <NavPane>
          <NavList>
            {NAV_ITEMS.map(item => (
              <NavRow key={item.label} $level={item.level} $selected={item.selected}>
                {item.icon}
                {item.label}
              </NavRow>
            ))}
          </NavList>
          <VBar $top={4} $bottom={0}>
            <BarArrow><ChevronUp size={13} strokeWidth={2.2} /></BarArrow>
            <VThumb $top={147} $h={73} />
            <BarArrow><ChevronDown size={13} strokeWidth={2.2} /></BarArrow>
          </VBar>
        </NavPane>

        <ListPane>
          <ListMain>
            <HeaderRow>
              <HeaderCell>Name</HeaderCell>
              <HeaderCell>Date modified</HeaderCell>
              <HeaderCell>Type</HeaderCell>
              <HeaderCell $last>Size</HeaderCell>
              <SortMark><ChevronDown size={10} strokeWidth={1.2} /></SortMark>
            </HeaderRow>
            <Rows>
              <FileRow
                selected
                file={{ name: 'WeModPatcher.bat', date: '10/12/2024 9:22 PM', type: 'Windows Batch File', size: '76 KB', icon: <BatFile /> }}
              />
              <FileGroup title="Earlier this year (2)" />
              {EARLIER.map(f => <FileRow key={f.name} file={f} />)}
              <FileGroup title="A long time ago (10)" />
              {LONG_AGO.map(f => <FileRow key={f.name} file={f} />)}
            </Rows>
            <HBar>
              <BarArrow><ChevronLeft size={13} strokeWidth={2.2} /></BarArrow>
              <HThumb />
              <BarArrow $mr={2}><ChevronRight size={13} strokeWidth={2.2} /></BarArrow>
            </HBar>
          </ListMain>
          <VBar $top={5} $bottom={17}>
            <BarArrow><ChevronUp size={13} strokeWidth={2.2} /></BarArrow>
            <VThumb $top={53} $h={283} />
            <BarArrow><ChevronDown size={13} strokeWidth={2.2} /></BarArrow>
          </VBar>
        </ListPane>
      </MainArea>

      <StatusBar>
        <StatusCount>14 items</StatusCount>
        <StatusSel>1 item selected</StatusSel>
        <span>75.7 KB</span>
        <ViewButtons>
          <ViewButton $on>
            <svg width="15" height="13" viewBox="0 0 15 13" fill="none" stroke="#5a7fa8">
              <path d="M.5.5h14v12H.5zM5.500.5v12M.5 4.500h14M.5 8.500h14" />
            </svg>
          </ViewButton>
          <ViewButton>
            <svg width="15" height="13" viewBox="0 0 15 13">
              <rect x=".5" y=".5" width="14" height="12" fill="#fff" stroke="#6c7c8c" />
              <rect x="3" y="3" width="9" height="7" fill="#4a90d0" />
            </svg>
          </ViewButton>
        </ViewButtons>
      </StatusBar>
    </Explorer>

    <Watermark>
      <MarkWord $w={66} $sx={0.57}>ANY</MarkWord>
      <AnyRunMark />
      <MarkWord $w={58} $sx={0.5} $ml={7}>RUN</MarkWord>
    </Watermark>

    <Taskbar>
      <StartButton><WindowsLogo /></StartButton>
      <TaskSearch>
        <TaskGlass><Search size={18} strokeWidth={1.2} /></TaskGlass>
        Type here to search
      </TaskSearch>
      <TaskSlot>
        <svg width="16" height="18" viewBox="0 0 16 18" fill="none" stroke="#fff" strokeWidth="1.300">
          <path d="M0 1h10M0 17h10M1 5h9v8H1zM14 1v3M14 7v4M14 14v3" />
        </svg>
      </TaskSlot>
      <TaskSlot $ml={3} $running><Edge /></TaskSlot>
      <TaskSlot $active $running><ExplorerIcon /></TaskSlot>
      <TaskSlot $ml={2}><Firefox /></TaskSlot>
      <TaskSlot $running><Terminal /></TaskSlot>
      <Tray>
        <TraySlot><ChevronUp size={17} strokeWidth={1.1} /></TraySlot>
        <TraySlot>
          <svg width="14" height="16" viewBox="0 0 14 16" fill="none" stroke="#fff">
            <rect x="1" y="5" width="8" height="7" rx="1" />
            <path d="M9 8l4-2v5l-4-2M2 2.500c2-1.500 5-1.500 7 0M2 14.500c2 1 5 1 7 0" />
          </svg>
        </TraySlot>
        <TraySlot>
          <svg width="16" height="16" viewBox="0 0 16 16" fill="none" stroke="#fff">
            <path d="M4 .5h11.500v10H7M.5.500h3v8h-3zM5 14.500h8M9 10.500v4" />
          </svg>
        </TraySlot>
        <TraySlot>
          <svg width="17" height="16" viewBox="0 0 17 16" fill="none" stroke="#fff">
            <path d="M1 5.500h3L8 2v12l-4-3.500H1zM10.500 5.500c1 1.500 1 3.500 0 5M12.500 3.500c2 2.500 2 6.500 0 9" />
          </svg>
        </TraySlot>
        <Clock>
          <span>9:28 PM</span>
          <span>11/19/2024</span>
        </Clock>
        <Notify>
          <svg width="16" height="17" viewBox="0 0 16 17" fill="none" stroke="#fff">
            <path d="M.5 1h15v12h-4.500L8 16l-3-3H.5z" />
          </svg>
        </Notify>
      </Tray>
    </Taskbar>
  </Desktop>
);

export default App;
